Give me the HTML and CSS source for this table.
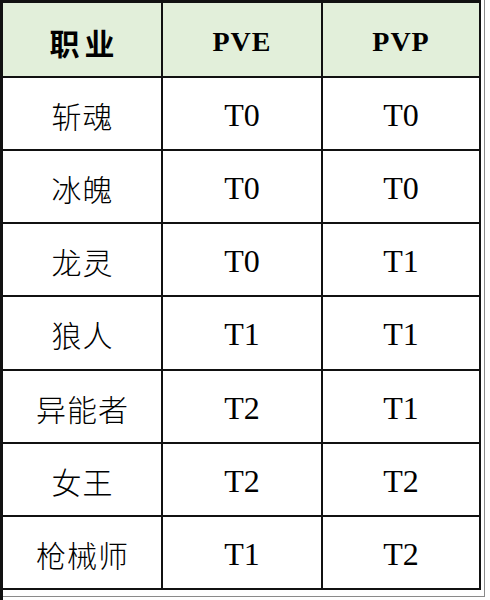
FILE: index.html
```html
<!DOCTYPE html>
<html lang="zh-CN">
<head>
<meta charset="utf-8">
<title>职业 PVE PVP</title>
<link rel="stylesheet" href="styles.css">
</head>
<body>
<div class="page">
  <div class="sheet">
    <table class="grid">
      <colgroup>
        <col class="c1"><col class="c2"><col class="c3">
      </colgroup>
      <thead>
        <tr>
          <th class="hname">职业</th>
          <th class="hmode">PVE</th>
          <th class="hmode">PVP</th>
        </tr>
      </thead>
      <tbody>
        <tr><td class="name">斩魂</td><td>T0</td><td>T0</td></tr>
        <tr><td class="name">冰魄</td><td>T0</td><td>T0</td></tr>
        <tr><td class="name">龙灵</td><td>T0</td><td>T1</td></tr>
        <tr><td class="name">狼人</td><td>T1</td><td>T1</td></tr>
        <tr><td class="name">异能者</td><td>T2</td><td>T1</td></tr>
        <tr><td class="name">女王</td><td>T2</td><td>T2</td></tr>
        <tr><td class="name">枪械师</td><td>T1</td><td>T2</td></tr>
      </tbody>
    </table>
  </div>
</div>
</body>
</html>
```
FILE: styles.css
```css
html, body {
  margin: 0;
  padding: 0;
  background: #ffffff;
}

.page {
  width: 490px;
  height: 600px;
  box-sizing: border-box;
  border-left: 3px solid #111111;
  overflow: hidden;
}

.sheet {
  width: 482px;
  box-sizing: border-box;
  border-right: 1px solid #8a8a8a;
  border-bottom: 1px solid #8a8a8a;
  padding-right: 3px;
  padding-bottom: 6px;
}

.grid {
  border-collapse: separate;
  border-spacing: 0;
  table-layout: fixed;
  width: 478px;
  border-top: 3px solid #111111;
}

.c1 { width: 160px; }
.c2 { width: 160px; }
.c3 { width: 158px; }

.grid th,
.grid td {
  padding: 0;
  border-right: 2px solid #111111;
  border-bottom: 2px solid #111111;
  text-align: center;
  vertical-align: middle;
  color: #000000;
}

.grid th {
  height: 73px;
  background: #e2efda;
  padding-top: 5px;
  box-sizing: border-box;
  height: 75px;
}

.hname {
  font-family: "Noto Sans CJK SC", sans-serif;
  font-weight: 700;
  font-size: 30px;
  letter-spacing: 5px;
  text-indent: 5px;
}

.hmode {
  font-family: "Liberation Serif", serif;
  font-weight: 700;
  font-size: 28px;
  letter-spacing: 1px;
}

.grid td {
  height: 73.14px;
  box-sizing: border-box;
  padding-top: 3px;
  font-family: "Liberation Serif", "Noto Sans CJK SC", serif;
  font-size: 32px;
  line-height: 1;
}

.grid td.name {
  font-family: "Noto Sans CJK SC", sans-serif;
  font-weight: 300;
  font-size: 30px;
  letter-spacing: 1px;
  text-indent: 1px;
}
```
